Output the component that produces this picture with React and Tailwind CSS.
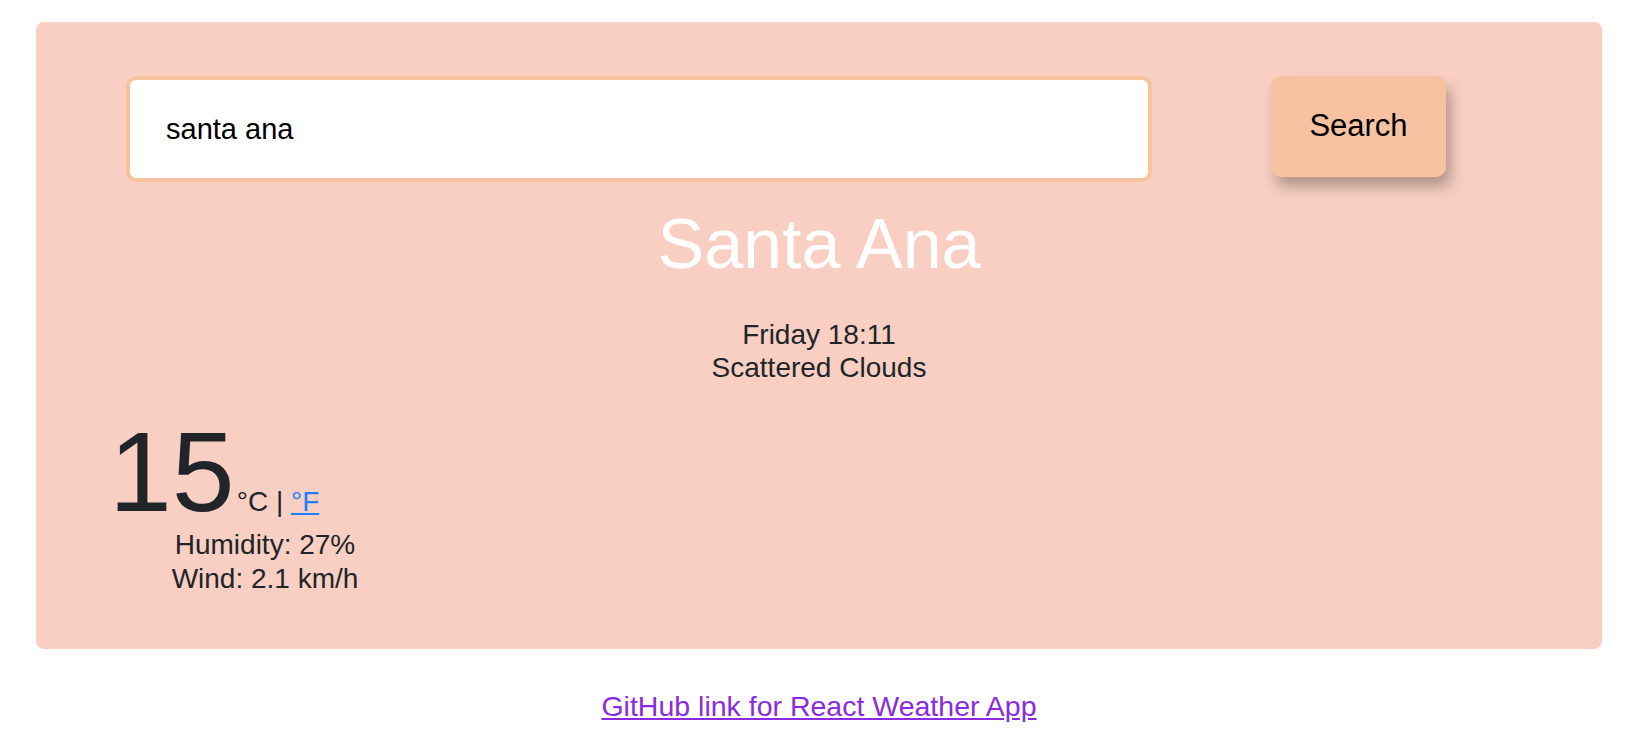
import { useState } from "react";

function SearchForm({ city, setCity }) {
  return (
    <form
      className="flex items-start pl-[90px]"
      onSubmit={(e) => e.preventDefault()}
    >
      <input
        type="search"
        value={city}
        onChange={(e) => setCity(e.target.value)}
        className="w-[1026px] h-[106px] bg-white border-4 border-[#f7c39e] rounded-[10px] pl-[36px] text-[29px] text-black outline-none"
      />
      <button
        type="submit"
        className="ml-[119px] w-[175px] h-[101px] rounded-[10px] bg-[#f6c2a2] text-[31px] text-black shadow-[5px_10px_14px_rgba(0,0,0,0.28)]"
      >
        Search
      </button>
    </form>
  );
}

function WeatherInfo() {
  return (
    <div>
      <h1 className="mt-[20px] text-center text-white text-[70px] leading-[84px] font-normal">
        Santa Ana
      </h1>
      <ul className="mt-[32px] text-center text-[#212529] text-[28px] leading-[33px]">
        <li>Friday 18:11</li>
        <li>Scattered Clouds</li>
      </ul>
      {/* temperature */}
      <div className="mt-[32px] pl-[73px] flex items-baseline text-[#212529]">
        <span className="text-[113px] leading-[112px]">15</span>
        <span className="ml-[2px] text-[28px]">
          °C |{" "}
          <a href="#" className="text-[#1c82ff] underline">
            °F
          </a>
        </span>
      </div>
      <ul className="ml-[78px] w-[302px] text-center text-[#212529] text-[28px] leading-[34px]">
        <li>Humidity: 27%</li>
        <li>Wind: 2.1 km/h</li>
      </ul>
    </div>
  );
}

export default function App() {
  const [city, setCity] = useState("santa ana");

  return (
    <div
      className="min-h-screen bg-white pt-[22px]"
      style={{ fontFamily: '"Liberation Sans", Arial, sans-serif' }}
    >
      <div className="ml-[36px] w-[1566px] h-[627px] bg-[#f8cfc2] rounded-lg pt-[54px]">
        <SearchForm city={city} setCity={setCity} />
        <WeatherInfo />
      </div>
      <footer className="mt-[40px] ml-[36px] w-[1566px] text-center text-[28.5px] leading-[34px]">
        <a href="#" className="text-[#8a2be2] underline">
          GitHub link for React Weather App
        </a>
      </footer>
    </div>
  );
}
